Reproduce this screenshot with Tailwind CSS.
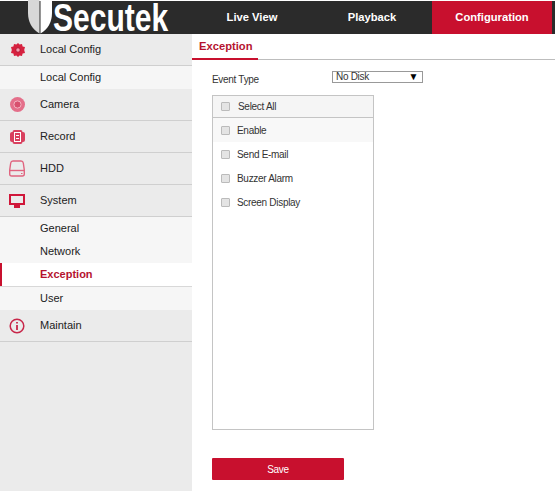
<!DOCTYPE html>
<html lang="en">
<head>
    <meta charset="UTF-8">
    <title>Secutek - Configuration</title>
    <script src="https://cdn.jsdelivr.net/npm/@tailwindcss/browser@4"></script>
</head>
<body class="bg-white font-['Liberation_Sans',Arial,sans-serif] text-[11px] text-[#333] w-[555px] h-[491px] overflow-hidden flex flex-col">
    <!-- Top bar -->
    <header class="h-[33px] mt-px bg-[#2b2b2b] flex shrink-0">
        <div class="w-[192px] relative">
            <svg class="absolute left-[28px] top-[-1px] w-[24px] h-[34px]" viewBox="0 0 24 34">
                <path d="M0 0H11.5V33.5C4 29 0 22 0 13Z" fill="#d8d8d8"/>
                <path d="M12.5 0H24V13C24 22 20 29 12.5 33.5Z" fill="#fff"/>
            </svg>
            <span class="absolute left-[53px] top-0 font-bold text-[39px] leading-[33px] text-white origin-left scale-x-[0.77] whitespace-nowrap">Secutek</span>
        </div>
        <nav class="flex font-bold text-[11.2px] text-white">
            <a class="w-[120px] flex items-center justify-center">Live View</a>
            <a class="w-[120px] flex items-center justify-center">Playback</a>
            <a class="w-[120px] flex items-center justify-center bg-[#c8102e]">Configuration</a>
        </nav>
    </header>

    <div class="flex flex-1 min-h-0">
        <!-- Sidebar -->
        <aside class="w-[192px] bg-[#ebebeb] shrink-0 text-[11px] text-[#222]">
            <div class="h-[32px] flex items-center border-b border-[#cfcfcf]">
                <svg class="w-[14px] h-[14px] ml-[11px] mr-[15px]" viewBox="0 0 14 14">
                    <path d="M7 0l1.6 1.6L11 1l.6 2.4L14 4l-.8 3 .8 3-2.4.6L11 13l-2.4-.6L7 14l-1.6-1.6L3 13l-.6-2.4L0 10l.8-3L0 4l2.4-.6L3 1l2.4.6Z" fill="#d6213f"/>
                    <circle cx="7" cy="7" r="2.2" fill="#f3a0b0" stroke="#a80f2c" stroke-width="0.8"/>
                </svg>
                <span>Local Config</span>
            </div>
            <div class="h-[23px] bg-[#f6f6f6] flex items-center pl-[40px]">Local Config</div>
            <div class="h-[32px] flex items-center border-b border-[#cfcfcf]">
                <svg class="w-[15px] h-[15px] ml-[10px] mr-[15px]" viewBox="0 0 15 15">
                    <circle cx="7.5" cy="7.5" r="7.5" fill="#e46f8a"/>
                    <circle cx="7.5" cy="7.5" r="3.6" fill="#d8506e" stroke="#f3b3c2" stroke-width="1"/>
                </svg>
                <span>Camera</span>
            </div>
            <div class="h-[32px] flex items-center border-b border-[#cfcfcf]">
                <svg class="w-[15px] h-[14px] ml-[10px] mr-[15px]" viewBox="0 0 15 14">
                    <rect x="0" y="2" width="15" height="10" rx="2" fill="#d9405f"/>
                    <rect x="2.5" y="0" width="10" height="14" rx="2" fill="#d9405f"/>
                    <rect x="4.5" y="2.5" width="6" height="9" fill="none" stroke="#fff" stroke-width="1"/>
                    <path d="M6 5.5h3M6 8.5h3" stroke="#fff" stroke-width="1"/>
                </svg>
                <span>Record</span>
            </div>
            <div class="h-[32px] flex items-center border-b border-[#cfcfcf]">
                <svg class="w-[16px] h-[17px] ml-[9px] mr-[15px]" viewBox="0 0 16 17">
                    <path d="M4 1h8q2 0 2.300 2l1 7v4q0 2-2 2H2.700q-2 0-2-2v-4l1-7Q2 1 4 1Z" fill="none" stroke="#e0647f" stroke-width="1.400"/>
                    <path d="M1 10.500h14" stroke="#e0647f" stroke-width="1.400"/>
                    <path d="M12 13.500h1.500" stroke="#e0647f" stroke-width="1.200"/>
                </svg>
                <span>HDD</span>
            </div>
            <div class="h-[32px] flex items-center border-b border-[#cfcfcf]">
                <svg class="w-[16px] h-[14px] ml-[9px] mr-[15px]" viewBox="0 0 16 14">
                    <rect x="1" y="1" width="14" height="9" fill="none" stroke="#d0173a" stroke-width="2"/>
                    <rect x="5" y="11" width="6" height="3" fill="#d0173a"/>
                </svg>
                <span>System</span>
            </div>
            <div class="h-[23px] bg-[#f6f6f6] flex items-center pl-[40px]">General</div>
            <div class="h-[23px] bg-[#f6f6f6] flex items-center pl-[40px]">Network</div>
            <div class="h-[23px] bg-white flex items-center pl-[38px] font-bold text-[#b5132f] border-l-2 border-[#c8102e]">Exception</div>
            <div class="h-[24px] bg-[#f6f6f6] flex items-center pl-[40px] border-t border-[#d8d8d8]">User</div>
            <div class="h-[32px] flex items-center border-b border-[#cfcfcf]">
                <svg class="w-[16px] h-[16px] ml-[9px] mr-[15px]" viewBox="0 0 16 16">
                    <circle cx="8" cy="8" r="6.800" fill="none" stroke="#c8274a" stroke-width="1.500"/>
                    <path d="M8 4v1.600M8 7v5" stroke="#c8274a" stroke-width="1.800"/>
                </svg>
                <span>Maintain</span>
            </div>
        </aside>

        <!-- Main content -->
        <main class="flex-1 min-w-0">
            <div class="h-[26px] border-b border-[#bdbdbd]">
                <div class="w-[66px] h-[26px] border-b-2 border-[#c8102e] pl-[7px] pt-[5px] font-bold text-[11.2px] leading-[14px] text-[#b5132f]">Exception</div>
            </div>
            <div class="pl-[20px] pt-[11px]">
                <div class="flex h-[16px] text-[10px] tracking-[-0.3px]">
                    <label class="w-[120px] pt-[2px] leading-[13px]">Event Type</label>
                    <div class="w-[91px] h-[12px] border border-[#999] flex items-center justify-between pl-[3px] pr-[4px] leading-[10px]">
                        <span>No Disk</span>
                        <span class="text-[10px] text-black">▼</span>
                    </div>
                </div>
                <div class="w-[162px] h-[335px] mt-[8px] border border-[#c4c4c4] text-[10px] tracking-[-0.3px]">
                    <div class="h-[22px] bg-[#f5f5f5] border-b border-[#c4c4c4] flex items-center pl-[8px]">
                        <span class="w-[9px] h-[9px] bg-[#e4e4e4] border border-[#bbb] rounded-[1px] mr-[8px]"></span>Select All
                    </div>
                    <div class="h-[24px] bg-[#f8f8f8] flex items-center pl-[8px]">
                        <span class="w-[9px] h-[9px] bg-[#e4e4e4] border border-[#bbb] rounded-[1px] mr-[7px]"></span>Enable
                    </div>
                    <div class="h-[24px] flex items-center pl-[8px]">
                        <span class="w-[9px] h-[9px] bg-[#e4e4e4] border border-[#bbb] rounded-[1px] mr-[7px]"></span>Send E-mail
                    </div>
                    <div class="h-[24px] flex items-center pl-[8px]">
                        <span class="w-[9px] h-[9px] bg-[#e4e4e4] border border-[#bbb] rounded-[1px] mr-[7px]"></span>Buzzer Alarm
                    </div>
                    <div class="h-[24px] flex items-center pl-[8px]">
                        <span class="w-[9px] h-[9px] bg-[#e4e4e4] border border-[#bbb] rounded-[1px] mr-[7px]"></span>Screen Display
                    </div>
                </div>
                <button class="block w-[132px] h-[22px] mt-[28px] bg-[#c8102e] rounded-[1px] text-white text-[10px] tracking-[-0.3px]">Save</button>
            </div>
        </main>
    </div>
</body>
</html>
